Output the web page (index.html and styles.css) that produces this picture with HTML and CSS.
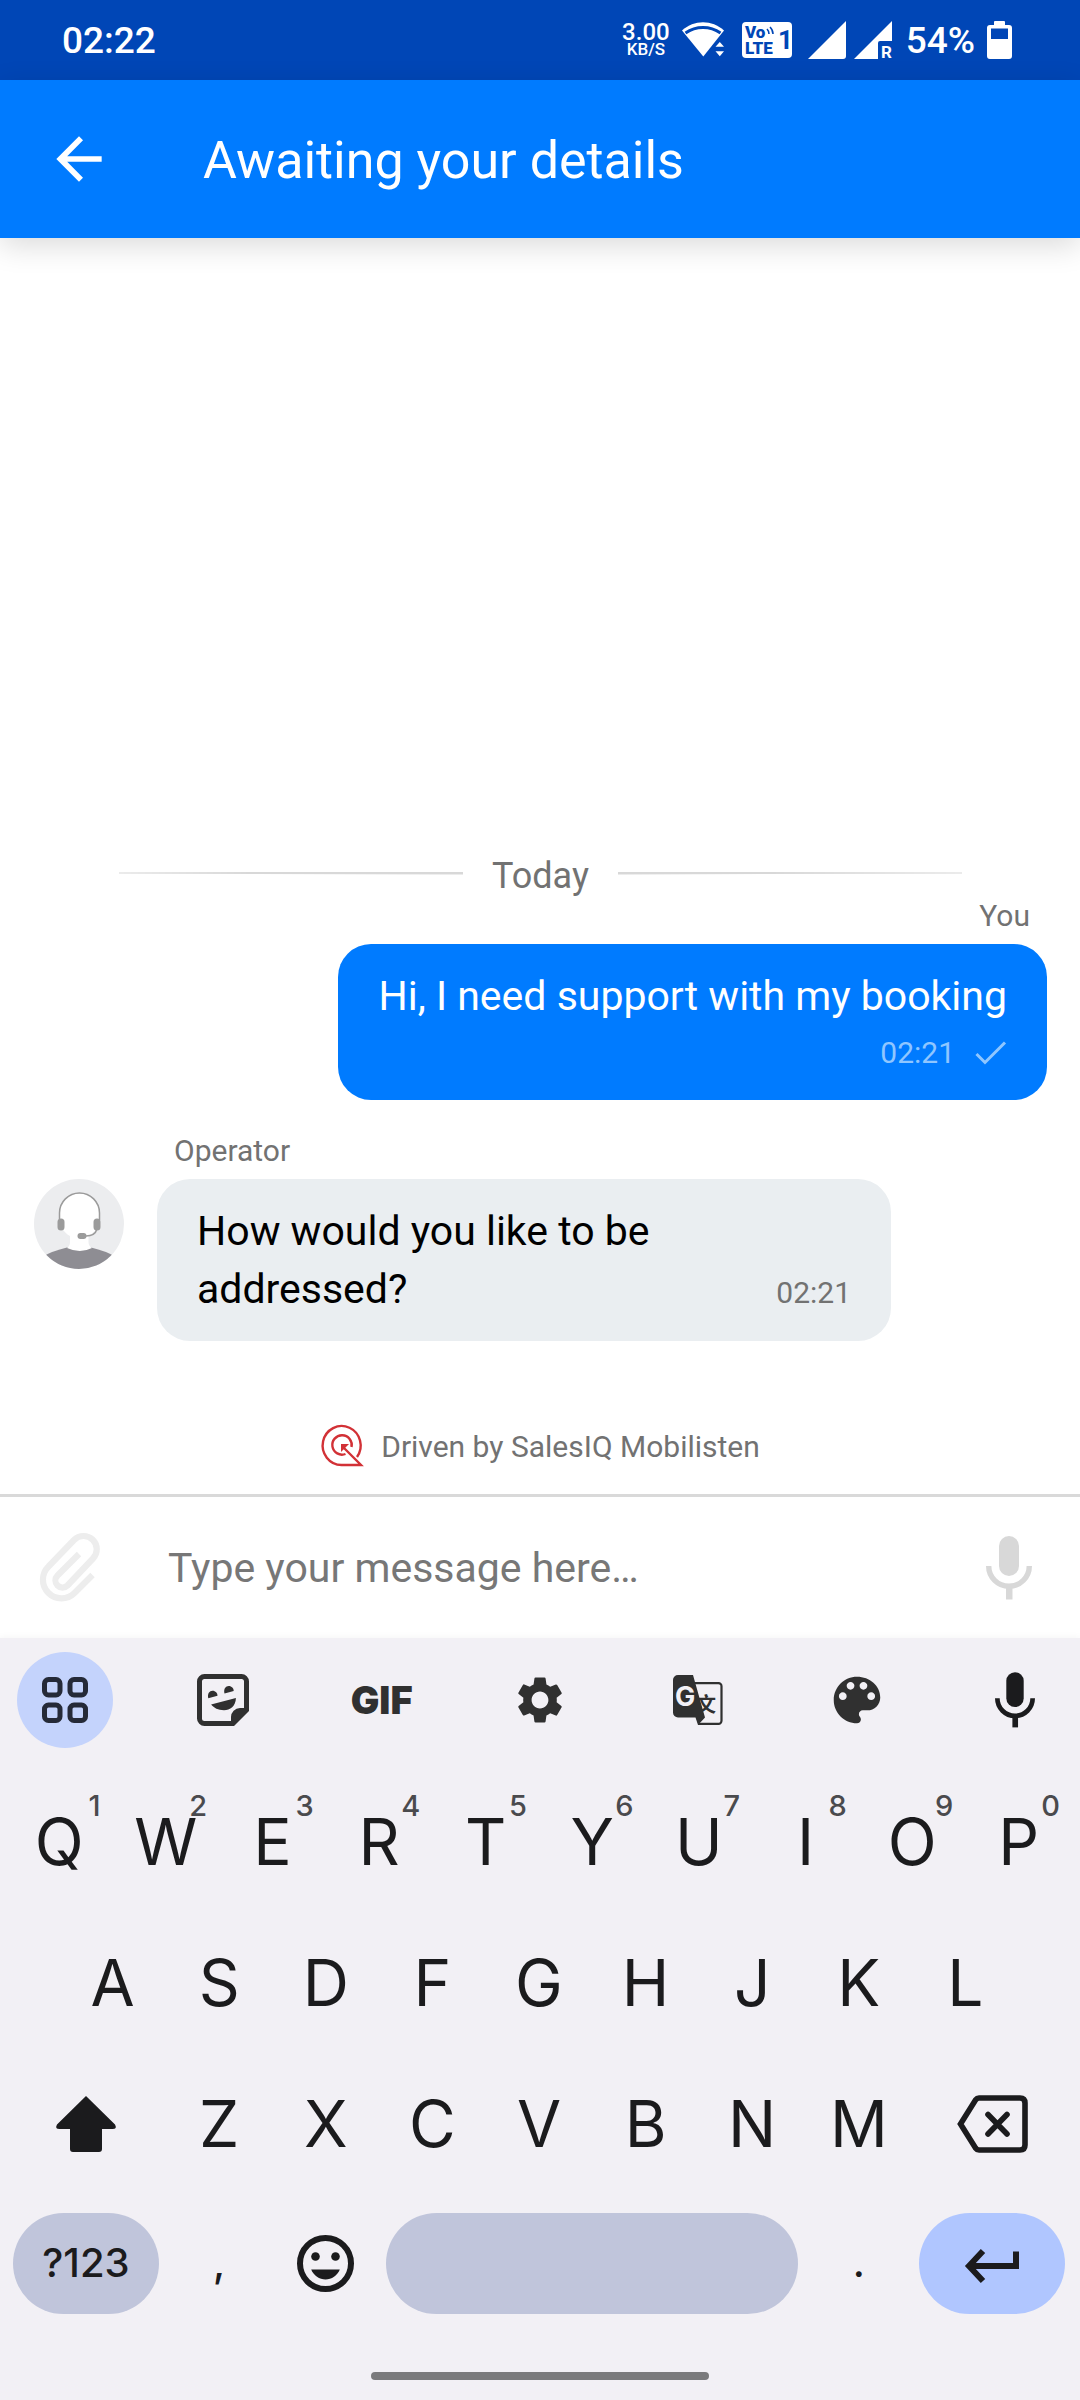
FILE: index.html
```html
<!DOCTYPE html>
<html lang="en">
<head>
<meta charset="utf-8">
<meta name="viewport" content="width=device-width, initial-scale=1">
<title>Awaiting your details</title>
<link rel="stylesheet" href="styles.css">
</head>
<body>
<svg class="defs" aria-hidden="true">
  <symbol id="mic" viewBox="0 0 46 64">
    <rect x="13" y="0" width="20" height="40" rx="10" fill="currentColor"/>
    <path d="M2.7 30a20.3 20.3 0 0 0 40.6 0" fill="none" stroke="currentColor" stroke-width="5.4"/>
    <path d="M20 51h6.5v12.5H20z" fill="currentColor"/>
  </symbol>
</svg>
<div class="screen">
  <div class="status">
    <span class="clock">02:22</span>
    <div class="indicators">
      <div class="speed"><span class="speed-value">3.00</span><span class="speed-unit">KB/S</span></div>
      <svg class="wifi" width="42" height="36" viewBox="0 0 42 36" aria-hidden="true">
        <path d="M0 8.5C12-2.5 30-2.5 42 8.5L21.3 34.5z" fill="#fff"/>
        <path d="M3.5 11C14 3.5 28 3.5 38.5 11" fill="none" stroke="#0046b6" stroke-width="3"/>
        <path d="M33.5 24.7L37.8 20l4.2 4.7zM33.5 29.3h8.5L37.8 34.3z" fill="#fff"/>
      </svg>
      <svg class="volte" width="50" height="36" viewBox="0 0 50 36" aria-hidden="true">
        <rect width="50" height="36" rx="4" fill="#fff"/>
        <text class="volte-text" x="3" y="16">Vo</text>
        <text class="volte-text" x="3" y="32">LTE</text>
        <text class="volte-sim" x="36" y="27">1</text>
        <path d="M25 7q2 2 2 5M28 5q3 3 3 7" fill="none" stroke="#0046b6" stroke-width="1.6"/>
      </svg>
      <svg class="signal" width="38" height="38" viewBox="0 0 38 38" aria-hidden="true"><path d="M38 0v35q0 3-3 3H0z" fill="#fff"/></svg>
      <svg class="signal-roam" width="38" height="38" viewBox="0 0 38 38" aria-hidden="true">
        <path d="M38 0v20H26q-2 0-2 2v16H0z" fill="#fff"/>
        <text class="roam-text" x="27" y="37">R</text>
      </svg>
      <span class="battery-level">54%</span>
      <svg class="battery" width="25" height="38" viewBox="0 0 25 38" aria-hidden="true">
        <path d="M8 0h9q1 0 1 1v3h4q3 0 3 3v28q0 3-3 3H3q-3 0-3-3V7q0-3 3-3h4V1q0-1 1-1z" fill="#fff"/>
        <path d="M4 7.5h17V18H4z" fill="#0046b6"/>
      </svg>
    </div>
  </div>

  <header class="appbar">
    <button class="icon-button back" type="button" aria-label="Back">
      <svg width="68" height="68" viewBox="0 0 24 24" fill="#fff"><path d="M20 11H7.83l5.59-5.59L12 4l-8 8 8 8 1.41-1.41L7.83 13H20z"/></svg>
    </button>
    <h1 class="title">Awaiting your details</h1>
  </header>

  <main class="chat">
    <div class="day"><span class="rule"></span><span class="day-name">Today</span><span class="rule rule-end"></span></div>

    <section class="message sent">
      <p class="sender">You</p>
      <div class="bubble">
        <p class="text">Hi, I need support with my booking</p>
        <div class="meta">
          <time>02:21</time>
          <svg width="32" height="26" viewBox="0 0 32 26" fill="none" stroke="currentColor" stroke-width="3" aria-hidden="true"><path d="M1.5 14l8.5 8.5L30 2.5"/></svg>
        </div>
      </div>
    </section>

    <section class="message received">
      <svg class="avatar" width="90" height="90" viewBox="0 0 90 90" aria-hidden="true">
        <defs><clipPath id="disc"><circle cx="45" cy="45" r="45"/></clipPath></defs>
        <g clip-path="url(#disc)">
          <path d="M0 0h90v90H0z" fill="#ecedef"/>
          <path d="M8 78q10-6 25-9.5h24q15 3.5 25 9.5v14H8z" fill="#8e8d93"/>
          <path d="M25.5 34a20 20 0 0 1 40 0c0 13-4 19-11 23v6q0 4 3.5 6-12 6-25 0 3-2 3-6v-6c-7-4-10.500-10-10.500-23z" fill="#fff"/>
          <path d="M25.5 41v-7a20 20 0 0 1 40 0v7M63 50q-2 7-11 7" fill="none" stroke="#9b9b9b" stroke-width="1.5"/>
          <rect x="23.5" y="39.5" width="7" height="12" rx="3.5" fill="#9b9b9b"/>
          <rect x="59.5" y="39.5" width="7" height="12" rx="3.5" fill="#9b9b9b"/>
          <rect x="43.5" y="54" width="9" height="6" rx="3" fill="#9b9b9b"/>
        </g>
      </svg>
      <div class="stack">
        <p class="sender">Operator</p>
        <div class="bubble">
          <p class="text">How would you like to be addressed?</p>
          <time>02:21</time>
        </div>
      </div>
    </section>

    <p class="credit">
      <svg width="42" height="42" viewBox="0 0 42 42" fill="none" stroke="#d23136" stroke-width="2.4" aria-hidden="true">
        <path d="M36 32A19 19.5 0 1 0 20.5 40H40L22 22"/>
        <path d="M30.5 22A9.7 9.7 0 1 0 24.5 29"/>
        <path d="M20 19h8l-3.500 3.500L20 27z" fill="#d23136" stroke="none"/>
      </svg>
      <span>Driven by SalesIQ Mobilisten</span>
    </p>
  </main>

  <form class="composer">
    <button class="icon-button attach" type="button" aria-label="Attach a file">
      <svg width="60" height="66" viewBox="0 0 60 66" fill="none" stroke="currentColor" stroke-width="6.2"><path d="M39 19L17.5 40.5a7 7 0 0 0 10 10L53 23.5A13.2 13.2 0 0 0 34 5L8.5 31.5A18.5 18.5 0 0 0 34.5 58L52.5 40"/></svg>
    </button>
    <input class="entry" type="text" aria-label="Message" placeholder="Type your message here…">
    <button class="icon-button record" type="button" aria-label="Record a voice message">
      <svg width="46" height="64"><use href="#mic"/></svg>
    </button>
  </form>

  <section class="keyboard" aria-label="Keyboard">
    <div class="tools">
      <button class="icon-button tool tool-active" type="button" aria-label="Menu">
        <svg width="46" height="46" viewBox="0 0 46 46" fill="none" stroke="#252a38" stroke-width="5"><rect x="2.5" y="2.5" width="15.5" height="15.5" rx="4"/><rect x="28" y="2.5" width="15.5" height="15.5" rx="4"/><rect x="2.5" y="28" width="15.5" height="15.5" rx="4"/><rect x="28" y="28" width="15.5" height="15.5" rx="4"/></svg>
      </button>
      <button class="icon-button tool" type="button" aria-label="Stickers">
        <svg width="52" height="52" viewBox="0 0 52 52" fill="#303030">
          <path d="M7.5 2.5h37a5 5 0 0 1 5 5V36L36 49.5H7.5a5 5 0 0 1-5-5v-37a5 5 0 0 1 5-5z" fill="none" stroke="#303030" stroke-width="5"/>
          <path d="M34 51v-8a9 9 0 0 1 9-9h8v3L37 51zM14.1 30.6L38.9 24c0 8-5.9 12.3-11.9 12.3s-10-2.3-12.9-5.7zM11.3 24.3c-1.1-4.8 1.2-7.6 4.2-7.6s5.1 2.3 5 5.1zM27.5 19.5c-1.1-4.8 1.2-7.6 4.2-7.6s5.1 2.3 5 5.1z"/>
        </svg>
      </button>
      <button class="icon-button tool tool-gif" type="button">GIF</button>
      <button class="icon-button tool" type="button" aria-label="Settings">
        <svg width="56" height="56" viewBox="0 0 24 24" fill="#303030"><path d="M19.14 12.94c.04-.3.06-.61.06-.94 0-.32-.02-.64-.07-.94l2.03-1.58c.18-.14.23-.41.12-.61l-1.92-3.32c-.12-.22-.37-.29-.59-.22l-2.39.96c-.5-.38-1.03-.7-1.62-.94l-.36-2.54c-.04-.24-.24-.41-.48-.41h-3.84c-.24 0-.43.17-.47.41l-.36 2.54c-.59.24-1.13.57-1.62.94l-2.39-.96c-.22-.08-.47 0-.59.22L2.74 8.87c-.12.21-.08.47.12.61l2.03 1.58c-.05.3-.09.63-.09.94s.02.64.07.94l-2.03 1.58c-.18.14-.23.41-.12.61l1.92 3.32c.12.22.37.29.59.22l2.39-.96c.5.38 1.03.7 1.62.94l.36 2.54c.05.24.24.41.48.41h3.84c.24 0 .44-.17.47-.41l.36-2.54c.59-.24 1.13-.56 1.62-.94l2.39.96c.22.08.47 0 .59-.22l1.92-3.32c.12-.22.07-.47-.12-.61l-2.01-1.58zM12 15.6c-1.98 0-3.6-1.62-3.6-3.6s1.62-3.6 3.6-3.6 3.6 1.62 3.6 3.6-1.62 3.6-3.6 3.6z"/></svg>
      </button>
      <button class="icon-button tool" type="button" aria-label="Translate">
        <svg width="50" height="50" viewBox="0 0 50 50" fill="#303030">
          <path d="M20 8.2h25.5a3 3 0 0 1 3 3v34.6a3 3 0 0 1-3 3H25" fill="none" stroke="#303030" stroke-width="2.2"/>
          <text class="translate-han" x="23" y="37">文</text>
          <path d="M5 0h15l12 42.5L25 50l-2.5-7.5H5a5 5 0 0 1-5-5V5a5 5 0 0 1 5-5z"/>
          <text class="translate-latin" x="2" y="31">G</text>
        </svg>
      </button>
      <button class="icon-button tool" type="button" aria-label="Themes">
        <svg width="62" height="62" viewBox="0 0 24 24" fill="#303030"><path d="M12 3c-4.97 0-9 4.03-9 9s4.03 9 9 9c.83 0 1.5-.67 1.5-1.5 0-.39-.15-.74-.39-1.01-.23-.26-.38-.61-.38-.99 0-.83.67-1.5 1.5-1.5H16c2.76 0 5-2.24 5-5 0-4.42-4.03-8-9-8zm-5.5 9c-.83 0-1.5-.67-1.5-1.5S5.67 9 6.5 9 8 9.67 8 10.5 7.33 12 6.5 12zm3-4C8.67 8 8 7.33 8 6.5S8.67 5 9.5 5s1.5.67 1.5 1.5S10.33 8 9.5 8zm5 0c-.83 0-1.5-.67-1.5-1.5S13.67 5 14.5 5s1.5.67 1.5 1.5S15.33 8 14.5 8zm3 4c-.83 0-1.5-.67-1.5-1.5S16.67 9 17.5 9s1.5.67 1.5 1.5-.67 1.5-1.5 1.5z"/></svg>
      </button>
      <button class="icon-button tool" type="button" aria-label="Voice typing">
        <svg width="40" height="56"><use href="#mic"/></svg>
      </button>
    </div>

    <div class="keys">
      <button class="key" type="button">Q<span class="hint">1</span></button>
      <button class="key" type="button">W<span class="hint">2</span></button>
      <button class="key" type="button">E<span class="hint">3</span></button>
      <button class="key" type="button">R<span class="hint">4</span></button>
      <button class="key" type="button">T<span class="hint">5</span></button>
      <button class="key" type="button">Y<span class="hint">6</span></button>
      <button class="key" type="button">U<span class="hint">7</span></button>
      <button class="key" type="button">I<span class="hint">8</span></button>
      <button class="key" type="button">O<span class="hint">9</span></button>
      <button class="key" type="button">P<span class="hint">0</span></button>

      <button class="key key-indent" type="button">A</button>
      <button class="key" type="button">S</button>
      <button class="key" type="button">D</button>
      <button class="key" type="button">F</button>
      <button class="key" type="button">G</button>
      <button class="key" type="button">H</button>
      <button class="key" type="button">J</button>
      <button class="key" type="button">K</button>
      <button class="key" type="button">L</button>

      <button class="key key-wide key-first" type="button" aria-label="Shift">
        <svg width="60" height="56" viewBox="0 0 60 56" fill="currentColor"><path d="M30 0l29 28.5q2.500 4.500-2.500 4.500H46v20q0 3-3 3H17q-3 0-3-3V33H3.500Q-1.500 33 1 28.500z"/></svg>
      </button>
      <button class="key" type="button">Z</button>
      <button class="key" type="button">X</button>
      <button class="key" type="button">C</button>
      <button class="key" type="button">V</button>
      <button class="key" type="button">B</button>
      <button class="key" type="button">N</button>
      <button class="key" type="button">M</button>
      <button class="key key-wide" type="button" aria-label="Backspace">
        <svg width="71" height="58" viewBox="0 0 71 58" fill="none" stroke="currentColor" stroke-width="5.6"><path d="M22 3h41q5 0 5 5v42q0 5-5 5H22q-2 0-3.5-2L3.5 29l15-24Q20 3 22 3z"/><path d="M31 19.5L50 39M50 19.5L31 39" stroke-linecap="round"/></svg>
      </button>

      <button class="key key-wide key-pill" type="button">?123</button>
      <button class="key key-small" type="button">,</button>
      <button class="key" type="button" aria-label="Emoji">
        <svg width="57" height="57" viewBox="0 0 57 57" fill="currentColor"><circle cx="28.5" cy="28.5" r="25.5" fill="none" stroke="currentColor" stroke-width="6"/><circle cx="18.5" cy="21.5" r="4.3"/><circle cx="38.5" cy="21.5" r="4.3"/><path d="M14.2 34.5h28.6c-2.3 6-8.3 10-14.3 10s-12-4-14.3-10z"/></svg>
      </button>
      <button class="key key-pill key-space" type="button" aria-label="Space"></button>
      <button class="key key-small" type="button">.</button>
      <button class="key key-wide key-pill key-enter" type="button" aria-label="Enter">
        <svg width="54" height="40" viewBox="0 0 54 40" fill="none" stroke="currentColor" stroke-width="6"><path d="M18 8L4 23l14 15M4 23h47V8.5"/></svg>
      </button>
    </div>
    <div class="home"></div>
  </section>
</div>
</body>
</html>
```
FILE: styles.css
```css
* { box-sizing: border-box; }

body {
  margin: 0;
  background: #fff;
  font-family: Roboto, "Liberation Sans", sans-serif;
}

p, h1 { margin: 0; font-weight: 400; }
svg { display: block; flex: none; overflow: visible; }
.defs { position: absolute; width: 0; height: 0; }

button, input {
  margin: 0;
  padding: 0;
  border: 0;
  background: none;
  color: inherit;
  font: inherit;
}

.icon-button {
  display: flex;
  flex: none;
  align-items: center;
  justify-content: center;
}

.screen {
  display: flex;
  flex-direction: column;
  min-height: 100vh;
}

/* Status bar */
.status {
  display: flex;
  align-items: center;
  justify-content: space-between;
  height: 80px;
  padding: 0 68px 0 62px;
  background: #0046b6;
  color: #fff;
}
.clock, .battery-level { font-size: 37px; font-weight: 500; line-height: 48px; padding-top: 2px; }
.indicators { display: flex; align-items: center; }
.speed {
  display: flex;
  flex-direction: column;
  align-items: center;
  font-weight: 500;
}
.speed-value { font-size: 24px; line-height: 18px; }
.speed-unit { font-size: 17px; line-height: 16px; }
.wifi { margin-left: 12px; }
.volte { margin-left: 18px; }
.signal { margin-left: 16px; }
.signal-roam { margin-left: 8px; }
.battery-level { margin-left: 14px; }
.battery { margin-left: 12px; }
.volte-text, .volte-sim, .roam-text { font-family: Roboto, sans-serif; font-weight: 900; }
.volte-text { font-size: 17px; fill: #0046b6; }
.volte-sim { font-size: 26px; font-weight: 700; fill: #0046b6; }
.roam-text { font-size: 17px; font-weight: 700; fill: #fff; }

/* App bar */
.appbar {
  display: flex;
  align-items: center;
  gap: 90px;
  height: 158px;
  padding: 0 45px;
  background: #007bff;
  color: #fff;
  box-shadow: 0 8px 28px rgba(0, 0, 0, 0.14);
}
.title { padding-top: 4px; font-size: 52px; line-height: 60px; }

/* Conversation */
.chat {
  display: flex;
  flex: 1;
  flex-direction: column;
  justify-content: flex-end;
  padding: 0 33px 27px 34px;
  color: #727272;
}
.day {
  display: flex;
  align-items: center;
  gap: 29px;
  padding: 0 85px;
  font-size: 36px;
  line-height: 44px;
}
.rule {
  flex: 1;
  height: 3px;
  margin-bottom: 6px;
  background: #d8d8d8;
  clip-path: polygon(0 33%, 100% 0, 100% 100%, 0 67%);
}
.rule-end { clip-path: polygon(0 0, 100% 33%, 100% 67%, 0 100%); }
.message { display: flex; }
.sender {
  margin-bottom: 10px;
  padding: 0 17px;
  font-size: 30px;
  line-height: 36px;
}
.bubble { padding: 23px 40px; border-radius: 33px; }
.text { font-size: 41px; line-height: 58px; }
.message time { font-size: 30px; }
.sent { flex-direction: column; align-items: flex-end; }
.sent .bubble { background: #007bff; color: #fff; }
.meta {
  display: flex;
  align-items: center;
  justify-content: flex-end;
  gap: 20px;
  padding-top: 4px;
  line-height: 48px;
  color: #8fc6ff;
}
.received {
  align-items: flex-start;
  gap: 33px;
  margin: 33px 156px 0 0;
}
.avatar { margin-top: 46px; }
.stack { flex: 1; }
.received .bubble {
  display: flex;
  align-items: last baseline;
  justify-content: space-between;
  background: #eaeef1;
}
.received .text { width: 500px; color: #000; }
.credit {
  display: flex;
  align-items: center;
  justify-content: center;
  gap: 18px;
  margin-top: 84px;
  font-size: 30px;
}

/* Message box */
.composer {
  display: flex;
  align-items: center;
  height: 144px;
  padding: 0 48px 0 40px;
  border-top: 3px solid #d9d9d9;
}
.attach { color: #ededed; }
.record { color: #d8d8d8; }
.entry {
  flex: 1;
  min-width: 0;
  margin-left: 68px;
  font-size: 41px;
}
.entry::placeholder { color: #777; opacity: 1; }

/* Keyboard */
.keyboard {
  background: #f2f0f5;
  color: #1b1b1d;
  font-family: Inter, "Liberation Sans", sans-serif;
  box-shadow: 0 0 8px rgba(0, 0, 0, 0.05);
}
.tools {
  display: flex;
  justify-content: space-between;
  padding: 14px 17px 23px;
}
.tool { width: 96px; height: 96px; border-radius: 50%; }
.tool-active { background: #c4d3fc; }
.tool-gif { color: #303030; font-size: 38px; font-weight: 900; }
.translate-latin { font: 700 27px Inter, sans-serif; fill: #f2f0f5; }
.translate-han { font: 700 20px "Noto Sans CJK SC", sans-serif; fill: #303030; }
.keys {
  display: grid;
  grid-template-columns: repeat(20, 1fr);
  grid-template-rows: repeat(3, 141px) 138px;
  padding: 0 8px 0 6px;
}
.key {
  position: relative;
  display: flex;
  grid-column: span 2;
  align-items: center;
  justify-content: center;
  font-size: 64px;
  line-height: 64px;
}
.key-indent { grid-column: 2 / span 2; }
.key-wide { grid-column: span 3; }
.key-first { grid-column: 1 / span 3; }
.key-space { grid-column: span 8; }
.key-small, .key-pill { font-size: 40px; font-weight: 500; }
.key-pill {
  height: 101px;
  margin: 0 7px;
  align-self: center;
  border-radius: 51px;
  background: #c0c5db;
}
.key-enter { background: #b0c6ff; }
.hint {
  position: absolute;
  top: 20px;
  right: 12px;
  color: #4a4a4d;
  font-size: 29px;
  font-weight: 500;
  line-height: 29px;
}
.home {
  width: 338px;
  height: 8px;
  margin: 40px auto 20px;
  border-radius: 4px;
  background: #7a7a7c;
}
```
